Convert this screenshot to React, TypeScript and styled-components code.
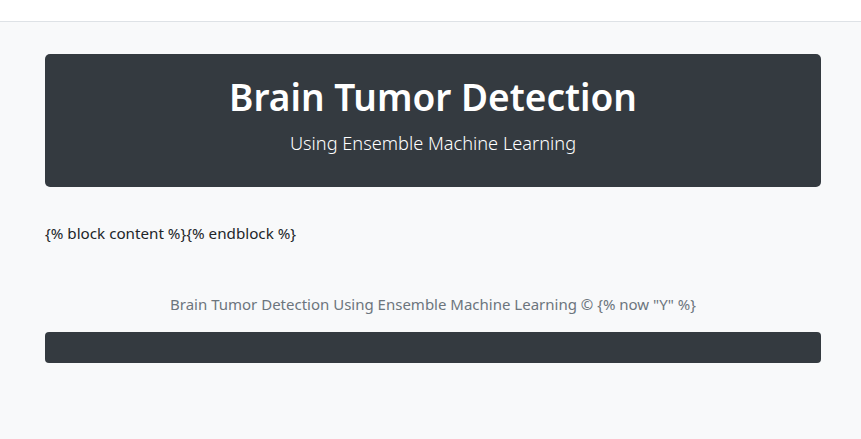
import React from "react";
import styled, { createGlobalStyle } from "styled-components";

const GlobalStyle = createGlobalStyle`
  html, body {
    margin: 0;
    padding: 0;
    background: #f8f9fa;
    font-family: "Noto Sans", "Open Sans", sans-serif;
    color: #212529;
  }
`;

const TopBar = styled.nav`
  height: 21px;
  background: #ffffff;
  border-bottom: 1px solid #dee2e6;
`;

const Container = styled.main`
  width: 776px;
  margin: 0 0 0 45px;
  padding: 32px 0 0;
`;

const Jumbotron = styled.header`
  height: 133px;
  box-sizing: border-box;
  padding-top: 19px;
  background: #343a40;
  border-radius: 5px;
  color: #ffffff;
  text-align: center;
`;

const Title = styled.h1`
  margin: 0;
  font-size: 37px;
  font-weight: 600;
  line-height: 48px;
`;

const Lead = styled.p`
  margin: 8px 0 0;
  font-size: 18.2px;
  font-weight: 300;
  line-height: 28px;
`;

const Content = styled.section`
  margin-top: 34px;
  font-size: 15.2px;
  line-height: 24px;
`;

const Footer = styled.footer`
  margin-top: 47px;
  text-align: center;
`;

const FooterText = styled.p`
  margin: 0;
  font-size: 15px;
  line-height: 24px;
  color: #6c757d;
`;

const FooterBar = styled.div`
  margin-top: 16px;
  height: 31px;
  background: #343a40;
  border-radius: 4px;
`;

const App: React.FC = () => {
  return (
    <>
      <GlobalStyle />
      <TopBar />
      <Container>
        <Jumbotron>
          <Title>Brain Tumor Detection</Title>
          <Lead>Using Ensemble Machine Learning</Lead>
        </Jumbotron>
        <Content>{"{% block content %}{% endblock %}"}</Content>
        <Footer>
          <FooterText>
            Brain Tumor Detection Using Ensemble Machine Learning © {'{% now "Y" %}'}
          </FooterText>
          <FooterBar />
        </Footer>
      </Container>
    </>
  );
};

export default App;
